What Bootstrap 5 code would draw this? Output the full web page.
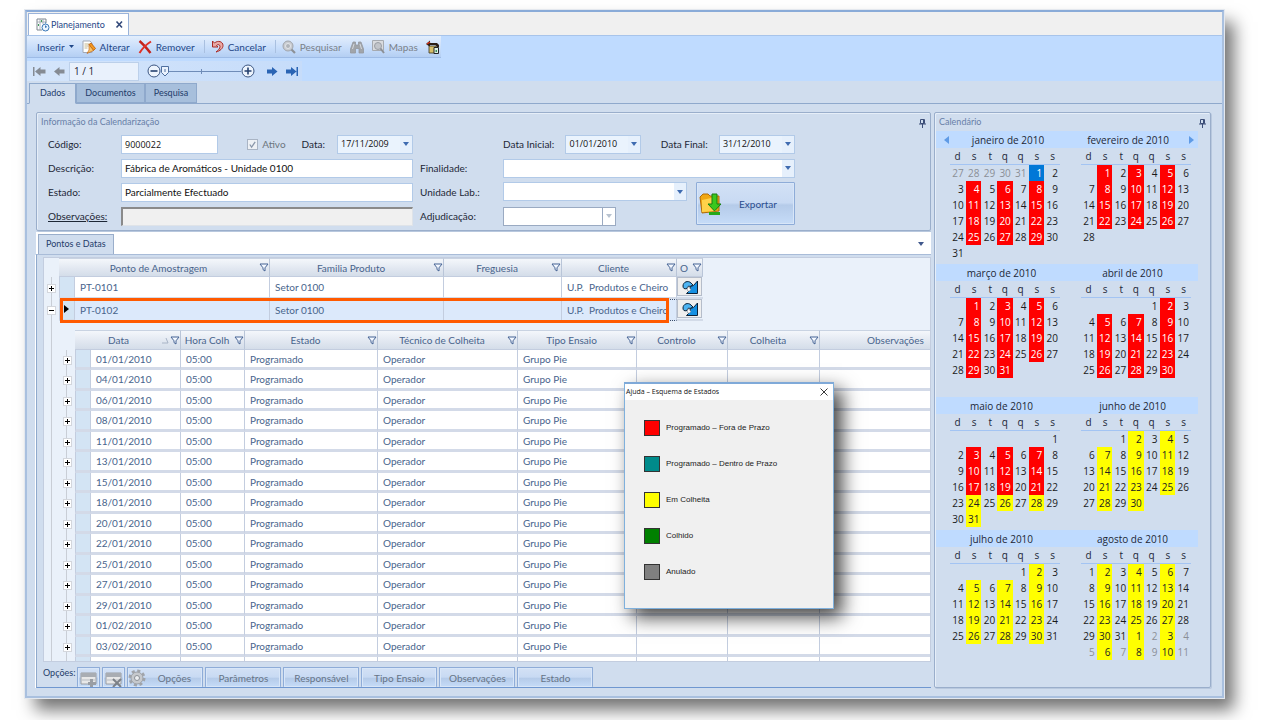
<!DOCTYPE html>
<html lang="pt">
<head>
<meta charset="utf-8">
<meta name="viewport" content="width=device-width, initial-scale=1">
<title>Planejamento</title>
<link href="https://cdn.jsdelivr.net/npm/bootstrap@5.3.0/dist/css/bootstrap.min.css" rel="stylesheet">
<style>
:root{--ui:Lato,"Open Sans",sans-serif;--figures:"Open Sans","Noto Sans",sans-serif;--panel:#d0ddee;--bar:#bfdbff;--edge:#9aaecb;--ink:#1d2736;--navy:#1f4788;--gridtext:#48648c;--line:#c3cddf}
body{font-family:var(--ui);font-size:10px;line-height:14px;color:var(--ink);background:#fff;padding:10px 56px 22px 25px}
button,input,select{font:inherit;color:inherit}
svg{display:block;flex:none}
.app-window{position:relative;height:calc(100vh - 32px);min-height:400px;background:var(--panel);border:2px solid #a9c0df;border-top-color:#8aabd8;box-shadow:0 0 0 1px #e4e8ee,10px 12px 16px rgba(0,0,0,.55)}
.doc-tabs{height:23px;background:#f0f0f0;padding-left:1px;padding-top:1px}
.doc-tab{background:#fff;border:1px solid #9ab3da;border-bottom:0;width:101px;padding:0 4px 0 7px;color:var(--navy);gap:1px;font-size:9px}
.plain{border:0;background:none;padding:0;display:inline-flex;align-items:center;justify-content:center}
.toolbars{background:var(--bar);height:46px;border-top:1px solid #a8c4ea}
.tool-strip{background:linear-gradient(#e3eefc,#c6dcfa 60%,#b4cff3);border-bottom:1px solid #9dbbe6;height:22px;width:414px;padding-left:10px}
.tool-strip button{color:var(--navy);gap:4px;height:22px}
.tool-strip button:disabled{color:#7b8188}
.tool-sep{width:1px;height:13px;background:#a9c0e0;margin:0 6px 0 9px}
.nav-strip{background:linear-gradient(90deg,#d4e5fb,#c6dcfa);height:20px;width:275px;margin-top:3px;padding-left:6px}
.rec-box{width:70px;height:19px;border:1px solid #bcd0ea;background:#e9f1fc;padding:0 4px;font-size:10px;font-family:var(--figures);border-radius:0}
.zoomer{appearance:none;width:80px;height:14px;margin:0;background:linear-gradient(#6f8cb8,#6f8cb8) 0 7px/100% 1px no-repeat,linear-gradient(#6f8cb8,#6f8cb8) 40px 5px/1px 5px no-repeat}
.zoomer::-webkit-slider-thumb{appearance:none;width:8px;height:11px;border-radius:0;background:url("data:image/svg+xml,%3Csvg xmlns='http://www.w3.org/2000/svg' width='8' height='11'%3E%3Cpath d='M.5.5h7v6L4 10 .5 6.500z' fill='%23eaf2fd' stroke='%234f6f9f'/%3E%3Cpath d='M3.500 3v3h1V3z' fill='%234f6f9f'/%3E%3C/svg%3E")}
.nav-tabs.page-tabs{height:23px;padding:2px 0 0 2px;border-bottom:1px solid #8fa9cc;font-size:9px}
.page-tabs .nav-link{border:1px solid #8fa9cc;border-radius:0;margin:0 0 -1px;height:20px;padding:2px 8px;background:#a7bfdc;color:#1f3c6a;line-height:14px}
.page-tabs .nav-link.active{background:var(--panel);border-color:#8fa9cc #8fa9cc var(--panel);height:21px;color:#1f3c6a;padding:2px 10px}
.page-body{height:calc(100% - 92px);padding:8px 11px 8px 8px;gap:3px}
.main-col{padding-left:1px}
.group-box{border:1px solid var(--edge);box-shadow:inset 1px 1px 0 #e6eef8,1px 1px 0 #b8c8de;border-radius:2px}
.group-title{color:#6880a8;height:19px;padding:2px 4px 0 4px;font-size:9px}
.info-grid{display:grid;grid-template-columns:73px minmax(180px,292px) 90px minmax(180px,292px);row-gap:4px;grid-auto-rows:20px;align-items:center;padding:2px 11px 4px 11px}
.info-grid .second{padding-left:7px}
.field{height:19px;border:1px solid #b2cae8;border-radius:0;background-color:#fff;padding:0 3px;line-height:14px;width:100%;outline:0;color:#111}
.field.figures{font-size:9px;font-family:var(--figures)}
.picker{appearance:none;background-image:url("data:image/svg+xml,%3Csvg xmlns='http://www.w3.org/2000/svg' width='6' height='4'%3E%3Cpath d='M0 0h6L3 4z' fill='%233f6bb0'/%3E%3C/svg%3E"),linear-gradient(#e6f0fc,#e6f0fc);background-repeat:no-repeat;background-position:right 3px center,right 0 center;background-size:6px 4px,12px 100%}
.picker.dated{background-color:#eaf3fd;width:76px;font-size:9px;font-family:var(--figures)}
.picker.lab{width:184px}
.picker.off{border-color:#9aaac2;background-image:url("data:image/svg+xml,%3Csvg xmlns='http://www.w3.org/2000/svg' width='6' height='4'%3E%3Cpath d='M0 0h6L3 4z' fill='%23b8c2d0'/%3E%3C/svg%3E"),linear-gradient(#9aaac2,#9aaac2);background-position:right 3px center,right 12px center;background-size:6px 4px,1px 100%;width:113px}
.sunk{background:#f0f0f0;border:1px solid #dfe3e8;border-top:2px solid #8a8a8a;border-left:2px solid #8a8a8a}
.form-check-input.tick{width:11px;height:11px;margin:0;border-radius:0;border:1px solid #a9b4c4;background-color:#eef1f5;background-image:url("data:image/svg+xml,%3Csvg xmlns='http://www.w3.org/2000/svg' viewBox='0 0 10 10'%3E%3Cpath d='M2 5l2 3 4-6' fill='none' stroke='%238a97aa' stroke-width='1.4'/%3E%3C/svg%3E");opacity:1}
.soft-btn{border:1px solid #8eacd8;border-radius:1px;background:linear-gradient(#d3e1f5,#c8daf3 48%,#b5cbe9 54%,#c6dcf8);box-shadow:inset 0 0 0 1px #d8e6f8;color:#2a4d8f}
.export-row{height:20px}
.export-btn{width:99px;height:43px;padding:0 0 0 2px}
.stack-tabs{background:#fff;height:22px;padding:2px 7px 0 2px;margin-top:1px}
.stack-tab{background:var(--panel);border:1px solid #9aaecb;border-bottom:0;padding:2px 7px;height:20px;color:#1f3c6a;font-size:9px}
.stack-pane{border-left:1px solid #8fa9cc;border-bottom:1px solid #6f97d0;border-top:1px solid #a9bcd8;box-shadow:-1px 1px 0 #fff,0 2px 0 #fff;padding:2px 0 0 6px;min-height:0}
.grid-wrap{position:relative;background:#eaf1fa;border:1px solid var(--line);overflow:hidden;min-height:0}
.sheet{border-collapse:separate;border-spacing:0;table-layout:fixed;color:var(--gridtext)}
.sheet th,.sheet td{padding:0;font-weight:400;overflow:hidden;white-space:nowrap}
.sheet th{height:20px;background:linear-gradient(#f4f7fb,#e2e8f1 55%,#d4dde9);border-right:1px solid #b9c5d8;border-top:1px solid #c9d3e2;border-bottom:1px solid #c3cddf;text-align:center}
.head{display:flex;align-items:center}
.head span{flex:1}
.head button{width:11px}
.sheet td.cell{background:#fff;border-right:1px solid var(--line);padding-left:5px}
.sheet td.mark-col{background:#d3e4f4;border-right:1px solid var(--line);border-left:1px solid var(--line)}
.sheet .tree{background:linear-gradient(#c9ced6,#c9ced6) 7px 0/1px 100% no-repeat #eaf1fa;border:0;text-align:center;vertical-align:middle;line-height:0}
.sheet th.tree{background:#eaf1fa}
.knob{width:7px;height:7px;background:#fff;box-shadow:0 0 0 1px #d3d6dc;vertical-align:middle}
.master>thead th{height:19px}
.master>tbody>tr.item>td{height:22px;border-bottom:2px solid #d3dbe8}
.master>tbody>tr.item>td.tree,.sheet.detail td.tree{border-bottom:0}
.master>tbody>tr.chosen>td.cell{background:#dce9fb;border-top:1px dotted #3c4c66;border-bottom:1px dotted #3c4c66}
.nest{padding-top:9px!important}
.detail{width:913px}
.detail tbody td{height:20px;border-bottom:3px solid #d3dae8;line-height:14px}
.detail tbody tr:nth-child(even) td{height:21px}
.row-mark{position:absolute;left:16px;top:40px;width:609px;height:25px;border:3px solid #ff5a00;pointer-events:none}
.ico-btn{width:25px;height:19px;background:#efefef;border:1px solid #b5bdca}
.foot{gap:2px;align-items:flex-start;color:#1f3c6a}
.foot-label{font-size:9px;padding-top:4px}
.foot .soft-btn{height:20px;margin-top:5px;width:76px;color:#667487;padding:1px 0 0;flex:none;border-bottom:0}
.foot .soft-btn.mini{width:23px}
.cal-box{width:277px;flex:none}
.cal-box .group-title{height:18px}
.months{margin:0 12px 0 1px;font-family:var(--figures)}
.month-title{background:var(--bar);height:17px}
.month{height:133px}
.days{width:110px;margin-left:14px;table-layout:fixed;border-collapse:separate;border-spacing:0}
.days th{font-weight:400;padding:0 5px 0 0;height:17px;text-align:right;border-bottom:1px solid #a3c4f3}
.days td{height:16px;padding:0 2px 0 0;text-align:right;line-height:14px;color:#1a1a1a}
.days td.late{background:#f00;color:#fff}.days td.open{background:#ff0;color:#222}.days td.today{background:#0078d7;color:#fff}.days td.other{color:#8b8f96}
.help-win{position:absolute;left:597px;top:370px;width:210px;height:227px;border:1px solid #7fb0dc;border-top:2px solid #7fa9d8;background:#f0f0f0;box-shadow:8px 8px 18px rgba(0,0,0,.75);color:#222}
.help-title{height:16px;background:#fff;font-family:"Open Sans",sans-serif;font-size:7px;padding:0 5px 0 1px;color:#111}
.legend-list{list-style:none;margin:0;padding:20px 0 0 19px;font-family:"Liberation Sans",sans-serif;font-size:8px}
.legend-list li{display:flex;align-items:center;gap:6px;height:16px;margin-bottom:20px;line-height:12px}
.swatch{width:16px;height:16px;border:1px solid #333}
</style>
</head>
<body>
<svg width="0" height="0" class="position-absolute" aria-hidden="true">
<symbol id="funnel" viewBox="0 0 10 9"><path d="M1 1h8L6 4.8V8L4 6.6V4.8z" fill="#f4f8ff" stroke="#456394"/></symbol>
<symbol id="pin" viewBox="0 0 7 9"><path d="M1.500.5h4v4h-4zM4.500 .5v4M0 5h7M3.500 5v4" fill="none" stroke="#3d4f78"/></symbol>
<symbol id="refresh" viewBox="0 0 16 14"><path d="M1 6C1 2 6 0 9 3l2 2-3 1.500C6.500 5.500 5.500 6.500 5 8.500 2 9.500 1 8 1 6z" fill="#4db4f2" stroke="#0b2239"/><path d="M15.500 1v12.500H4.500l3-3 1-4 3-1z" fill="#1590e2" stroke="#0b2239"/><path d="M5.500 10.500c-1-2 .5-4 2.500-3.500-.5 1 0 2 1 2.500l-2 2z" fill="#fff" stroke="#6c7a88" stroke-width=".6"/></symbol>
<symbol id="arrow" viewBox="0 0 11 9"><path d="M0 2.500h5V0l5.500 4.500L5 9V6.500H0z"/></symbol>
<symbol id="lens" viewBox="0 0 14 14"><circle cx="6" cy="6" r="5" fill="#c9ccd1" stroke="#a0a4aa"/><circle cx="6" cy="6" r="2.500" fill="#b0b4ba" stroke="#e4e6e9"/><path d="M9.500 9.500L13 13" stroke="#8c9096" stroke-width="2.200"/></symbol>
</svg>
<main class="app-window">
  <div class="doc-tabs d-flex">
    <div class="doc-tab d-flex align-items-center">
      <svg width="14" height="14" viewBox="0 0 14 14"><path d="M1 1h9v4M1 1v11h5" fill="#fff" stroke="#7f8791"/><path d="M1 4h9M4 1v11M7 1v5" stroke="#9aa2ac" stroke-width=".8"/><path d="M5 2h1v2H5zM2 6h1v2H2z" fill="#3e9b57"/><circle cx="9.500" cy="9.500" r="3.500" fill="#eef6ff" stroke="#3a78b8"/><path d="M9.500 7.500v2l1.500-1M9 5h1" fill="none" stroke="#3a78b8"/></svg>
      <span class="flex-grow-1">Planejamento</span>
      <button class="plain" aria-label="Fechar"><svg width="9" height="9" viewBox="0 0 9 9"><path d="M1.500 1.500l5.500 6M7 1.500l-5.500 6" stroke="#33497a" stroke-width="1.600"/></svg></button>
    </div>
  </div>
  <div class="toolbars">
    <div class="tool-strip d-flex align-items-center">
      <button class="plain me-2">Inserir<svg width="5" height="3" viewBox="0 0 5 3"><path d="M0 0h5L2.500 3z" fill="#1f4788"/></svg></button>
      <button class="plain me-2"><svg width="14" height="14" viewBox="0 0 14 14"><path d="M1 1h7l2 2v9.500H1z" fill="#fff" stroke="#a3a9b5"/><path d="M2.500 4h5M2.500 6h4M2.500 8h3" stroke="#c4b78e"/><path d="M7 4.500l2-1.500 4.500 5.500-2 2z" fill="#f49a20" stroke="#b8590b" stroke-width=".8"/><path d="M7 4.500l4.500 6-6.500 3 2-3.500z" fill="#f7c46a" stroke="#b8590b" stroke-width=".6"/></svg>Alterar</button>
      <button class="plain"><svg width="14" height="14" viewBox="0 0 14 14"><path d="M1.500 1C5 4 9 8.500 12.500 13" fill="none" stroke="#c4231b" stroke-width="2.400"/><path d="M13 1.500C9 4 4.500 8 1.500 13" fill="none" stroke="#e03127" stroke-width="2"/></svg>Remover</button>
      <span class="tool-sep"></span>
      <button class="plain"><svg width="13" height="13" viewBox="0 0 13 13"><path d="M1.500 1v6h5.500L5.500 5.500C7 4 9 4.500 9 6.500c0 2-1.500 3.500-4 5.500 4-1 7-3.500 7-6.500 0-4-5-5.500-8.500-2.500z" fill="#e9a9a5" stroke="#a82a26"/></svg>Cancelar</button>
      <span class="tool-sep"></span>
      <button class="plain me-2" disabled><svg width="14" height="14"><use href="#lens"/></svg>Pesquisar</button>
      <button class="plain me-2" disabled aria-label="Localizar"><svg width="14" height="14" viewBox="0 0 14 14"><path d="M3 2h2.500v3h3V2H11l2.500 7v4H9V8.500H5.500V13H.5V9z" fill="#a1a5aa" stroke="#94989e" stroke-width=".8"/><path d="M4 4l-1.500 5M10 4l1.500 5" stroke="#d6d9dd"/></svg></button>
      <button class="plain me-2" disabled><svg width="13" height="14" viewBox="0 0 13 14"><path d="M.5.5h11v10H.5z" fill="#d9dbde" stroke="#a6aab0"/><circle cx="6" cy="6" r="3.500" fill="#c2c5ca" stroke="#9a9ea4"/><path d="M8.500 8.500L12 13" stroke="#8c9096" stroke-width="2"/></svg>Mapas</button>
      <button class="plain" aria-label="Telefone"><svg width="14" height="14" viewBox="0 0 14 14"><path d="M0 4l4-3.500V3h7l2 2v2h-2L9.500 5H4v2z" fill="#2b1d14"/><path d="M3 6h7l2 7H3z" fill="#d6bf6a" stroke="#3a3320" stroke-width=".8"/><path d="M8 7.500h4.500v6H8z" fill="#dff0e4" stroke="#222"/><path d="M9.500 10h1.500v2H9.500z" fill="#3e8f5e"/><path d="M1 4l3-2" stroke="#d8331c" stroke-width="1.500"/></svg></button>
    </div>
    <div class="nav-strip d-flex align-items-center">
      <button class="plain me-2" disabled aria-label="Primeiro"><svg width="13" height="9" viewBox="0 0 13 9" fill="#858b94"><path d="M0 0h1.500v9H0zM12.500 2.500H7.500V0L2 4.500 7.500 9V6.500h5z"/></svg></button>
      <button class="plain me-1" disabled aria-label="Anterior"><svg width="11" height="9" viewBox="0 0 11 9" fill="#858b94"><path d="M10.500 2.500h-5V0L0 4.500 5.500 9V6.500h5z"/></svg></button>
      <input class="rec-box me-2" value="1 / 1" aria-label="Registo">
      <button class="plain" aria-label="Reduzir"><svg width="14" height="14" viewBox="0 0 14 14"><circle cx="7" cy="7" r="6" fill="#edf4fd" stroke="#3c5682"/><path d="M3.500 7h7" stroke="#24406f" stroke-width="1.600"/></svg></button>
      <input type="range" class="zoomer mx-0" value="0" aria-label="Zoom">
      <button class="plain me-2" aria-label="Ampliar"><svg width="14" height="14" viewBox="0 0 14 14"><circle cx="7" cy="7" r="6" fill="#edf4fd" stroke="#3c5682"/><path d="M3.500 7h7M7 3.500v7" stroke="#24406f" stroke-width="1.600"/></svg></button>
      <button class="plain mx-1" aria-label="Seguinte"><svg width="11" height="9" fill="#2a64b4"><use href="#arrow"/></svg></button>
      <button class="plain ms-1" aria-label="Último"><svg width="13" height="9" viewBox="0 0 13 9" fill="#2a64b4"><path d="M0 2.500h5V0l5.500 4.500L5 9V6.500H0zM10.500 0H12v9h-1.500z"/></svg></button>
    </div>
  </div>
  <ul class="nav nav-tabs page-tabs">
    <li class="nav-item"><a class="nav-link active" href="#dados">Dados</a></li>
    <li class="nav-item"><a class="nav-link" href="#documentos">Documentos</a></li>
    <li class="nav-item"><a class="nav-link" href="#pesquisa">Pesquisa</a></li>
  </ul>
  <div class="page-body d-flex" id="dados">
    <div class="main-col d-flex flex-column flex-grow-1 overflow-hidden">
      <section class="group-box">
        <div class="group-title d-flex justify-content-between"><span>Informação da Calendarização</span><button class="plain" aria-label="Fixar"><svg width="7" height="9"><use href="#pin"/></svg></button></div>
        <form class="info-grid">
          <label for="cod">Código:</label>
          <div class="d-flex align-items-center">
            <div class="col-4"><input class="field figures" id="cod" value="9000022"></div>
            <div class="d-flex align-items-center gap-1 ms-auto me-3 text-secondary"><input type="checkbox" class="form-check-input tick" id="ativo" checked disabled><label for="ativo">Ativo</label></div>
            <label for="data" class="me-2 pe-1">Data:</label>
            <select class="field picker dated" id="data"><option>17/11/2009</option></select>
          </div>
          <span></span>
          <div class="d-flex align-items-center justify-content-between">
            <label for="dini">Data Inicial:</label>
            <select class="field picker dated" id="dini"><option>01/01/2010</option></select>
            <label for="dfim" class="ps-2">Data Final:</label>
            <select class="field picker dated" id="dfim"><option>31/12/2010</option></select>
          </div>
          <label for="desc">Descrição:</label><input class="field" id="desc" value="Fábrica de Aromáticos - Unidade 0100">
          <label for="fin" class="second">Finalidade:</label><select class="field picker" id="fin"><option></option></select>
          <label for="est">Estado:</label><input class="field" id="est" value="Parcialmente Efectuado">
          <label for="lab" class="second">Unidade Lab.:</label>
          <div class="export-row d-flex align-items-start justify-content-between"><select class="field picker lab" id="lab"><option></option></select>
            <button type="button" class="soft-btn export-btn d-flex align-items-center"><svg width="23" height="24" viewBox="0 0 23 24"><path d="M1 5l3-3h5l2 2h9v15L3 21z" fill="#f0a713" stroke="#b06c08"/><path d="M3 8l14-3v14L3 20z" fill="#ffd24a"/><path d="M13 2h5v10h4l-6.500 7L9 12h4z" fill="#3bc71e" stroke="#167d10"/><path d="M10 20h11v3H10z" fill="#25a81a"/></svg><span class="flex-grow-1">Exportar</span></button></div>
          <label for="obs" class="text-decoration-underline">Observações:</label><input class="field sunk" id="obs">
          <label for="adj" class="second">Adjudicação:</label><select class="field picker off" id="adj"><option></option></select>
        </form>
      </section>
      <div class="stack-tabs d-flex justify-content-between align-items-center"><a class="stack-tab text-decoration-none" href="#pontos">Pontos e Datas</a><svg width="6" height="4" viewBox="0 0 6 4"><path d="M0 0h6L3 4z" fill="#40588c"/></svg></div>
      <div class="stack-pane flex-grow-1 d-flex flex-column" id="pontos">
        <div class="grid-wrap flex-grow-1">
          <table class="sheet master w-100">
            <colgroup><col style="width:15px"><col style="width:16px"><col style="width:195px"><col style="width:174px"><col style="width:118px"><col style="width:115px"><col style="width:26px"><col></colgroup>
            <thead><tr id="masterHead"></tr></thead>
            <tbody id="masterBody"></tbody>
          </table>
          <div class="row-mark"></div>
        </div>
        <div class="foot d-flex"><span class="foot-label">Opções:</span>
          <button class="soft-btn mini" disabled aria-label="Adicionar linha"><svg width="18" height="18" viewBox="0 0 18 18" class="m-auto"><path d="M1 4h15v11H1z" fill="#e8e8e8" stroke="#9a9ea4"/><path d="M1 4h15v4H1z" fill="#a9adb3"/><path d="M2 11h13" stroke="#b8bcc2"/><path d="M10 10h3v3h3v3h-3v2h-3v-2H8v-3h2z" fill="#9a9ea4"/></svg></button>
          <button class="soft-btn mini" disabled aria-label="Apagar linha"><svg width="18" height="18" viewBox="0 0 18 18" class="m-auto"><path d="M1 4h15v11H1z" fill="#e8e8e8" stroke="#9a9ea4"/><path d="M1 4h15v4H1z" fill="#a9adb3"/><path d="M2 11h13" stroke="#b8bcc2"/><path d="M8 10l8 8M16 10l-8 8" stroke="#7d8187" stroke-width="2"/></svg></button>
          <button class="soft-btn d-flex align-items-center" disabled><svg width="18" height="18" viewBox="0 0 18 18"><circle cx="9" cy="9" r="7" fill="none" stroke="#a0a4aa" stroke-width="3" stroke-dasharray="3 2.500"/><circle cx="9" cy="9" r="6" fill="#c6c9cd" stroke="#9da1a7"/><circle cx="9" cy="9" r="2.500" fill="#eceef0" stroke="#8d9197"/></svg><span class="flex-grow-1">Opções</span></button>
          <button class="soft-btn" disabled>Parâmetros</button><button class="soft-btn" disabled>Responsável</button><button class="soft-btn" disabled>Tipo Ensaio</button><button class="soft-btn" disabled>Observações</button><button class="soft-btn" disabled>Estado</button>
        </div>
      </div>
    </div>
    <aside class="cal-box group-box">
      <div class="group-title d-flex justify-content-between"><span>Calendário</span><button class="plain" aria-label="Fixar"><svg width="7" height="9"><use href="#pin"/></svg></button></div>
      <div class="months row row-cols-2 g-0" id="months"></div>
    </aside>
  </div>
  <div class="help-win" role="dialog" aria-label="Ajuda">
    <div class="help-title d-flex align-items-center justify-content-between"><span>Ajuda – Esquema de Estados</span><button class="plain" aria-label="Fechar"><svg width="8" height="8" viewBox="0 0 8 8"><path d="M.5.5l7 7M7.500.5l-7 7" stroke="#222" stroke-width=".9"/></svg></button></div>
    <ul class="legend-list">
      <li><span class="swatch" style="background:#f00"></span>Programado – Fora de Prazo</li>
      <li><span class="swatch" style="background:#008b8b"></span>Programado – Dentro de Prazo</li>
      <li><span class="swatch" style="background:#ff0"></span>Em Colheita</li>
      <li><span class="swatch" style="background:#008000"></span>Colhido</li>
      <li><span class="swatch" style="background:#808080"></span>Anulado</li>
    </ul>
  </div>
</main>
<script src="https://cdn.jsdelivr.net/npm/bootstrap@5.3.0/dist/js/bootstrap.bundle.min.js"></script>
<script>
const funnel = '<button class="plain" aria-label="Filtrar"><svg width="10" height="9"><use href="#funnel"/></svg></button>';
const sortUp = '<svg width="7" height="7" viewBox="0 0 7 7"><path d="M0 6h6L4 1" fill="none" stroke="#a8b4c6"/></svg>';
const knob = open => `<button class="knob plain" aria-label="Expandir"><svg width="5" height="5" viewBox="0 0 5 5"><path d="M0 2.500h5${open ? '' : 'M2.500 0v5'}" stroke="#000"/></svg></button>`;
const head = (t, span = 1, filter = true, extra = '') => `<th colspan="${span}"><div class="head"><span>${t}</span>${extra}${filter ? funnel : ''}</div></th>`;
const cells = a => a.map(t => `<td class="cell">${t}</td>`).join('');

document.getElementById('masterHead').innerHTML = '<th class="tree"></th>' + head('Ponto de Amostragem', 2) + head('Familia Produto') + head('Freguesia') + head('Cliente') + head('O');

const dates = ['01/01/2010','04/01/2010','06/01/2010','08/01/2010','11/01/2010','13/01/2010','15/01/2010','18/01/2010','20/01/2010','22/01/2010','25/01/2010','27/01/2010','29/01/2010','01/02/2010','03/02/2010'];
const detail = `<table class="sheet detail"><colgroup>${[16,16,90,64,133,140,119,91,92,152].map(w => `<col style="width:${w}px">`).join('')}</colgroup>
<thead><tr><th class="tree"></th>${head('Data', 2, true, sortUp)}${head('Hora Colh')}${['Estado','Técnico de Colheita','Tipo Ensaio','Controlo','Colheita'].map(t => head(t)).join('')}${head('Observações', 1, false)}</tr></thead>
<tbody>${dates.map(d => `<tr><td class="tree">${knob()}</td><td class="mark-col"></td>${cells([d,'05:00','Programado','Operador','Grupo Pie','','',''])}</tr>`).join('')}<tr><td class="tree"></td><td class="mark-col"></td>${cells(['','','','','','','',''])}</tr></tbody></table>`;

const action = '<td><button class="ico-btn plain" aria-label="Abrir"><svg width="16" height="14"><use href="#refresh"/></svg></button></td>';
const current = '<svg width="5" height="8" class="ms-1" viewBox="0 0 5 8"><path d="M0 0l5 4-5 4z"/></svg>';
const item = (name, chosen) => `<tr class="item${chosen ? ' chosen' : ''}"><td class="tree">${knob(chosen)}</td><td class="mark-col">${chosen ? current : ''}</td>${cells([name, 'Setor 0100', '', 'U.P. &nbsp;Produtos e Cheiro'])}${action}</tr>`;
document.getElementById('masterBody').innerHTML = item('PT-0101', false) + item('PT-0102', true) + `<tr><td class="tree"></td><td colspan="7" class="nest">${detail}</td></tr>`;

const names = ['janeiro','fevereiro','março','abril','maio','junho','julho','agosto'];
const firstOpen = new Date(2010, 4, 24);
const prev = '<button class="plain ms-2" aria-label="Anterior"><svg width="5" height="8"><path d="M5 0v8L0 4z" fill="#5f9be6"/></svg></button>';
const next = '<button class="plain me-1" aria-label="Seguinte"><svg width="5" height="8"><path d="M0 0v8l5-4z" fill="#5f9be6"/></svg></button>';
document.getElementById('months').innerHTML = names.map((n, m) => {
  const lead = new Date(2010, m, 1).getDay();
  let rows = '';
  for (let w = 0; w < 6; w++) {
    rows += '<tr>';
    for (let k = 0; k < 7; k++) {
      const d = new Date(2010, m, 1 - lead + w * 7 + k);
      const inside = d.getMonth() === m;
      const shown = inside || (m === 0 && w === 0) || (m === 7 && w > 3);
      const planned = [1, 3, 5].includes(k) && d > new Date(2010, 0, 1);
      const cls = !shown ? '' : +d === +new Date(2010, 0, 1) ? 'today' : planned ? (d >= firstOpen ? 'open' : 'late') : inside ? '' : 'other';
      rows += `<td class="${cls}">${shown ? d.getDate() : ''}</td>`;
    }
    rows += '</tr>';
  }
  return `<div class="col month"><div class="month-title d-flex align-items-center">${m === 0 ? prev : ''}<span class="flex-grow-1 text-center">${n} de 2010</span>${m === 1 ? next : ''}</div>
  <table class="days"><thead><tr>${[...'dstqqss'].map(c => `<th>${c}</th>`).join('')}</tr></thead><tbody>${rows}</tbody></table></div>`;
}).join('');
</script>
</body>
</html>
